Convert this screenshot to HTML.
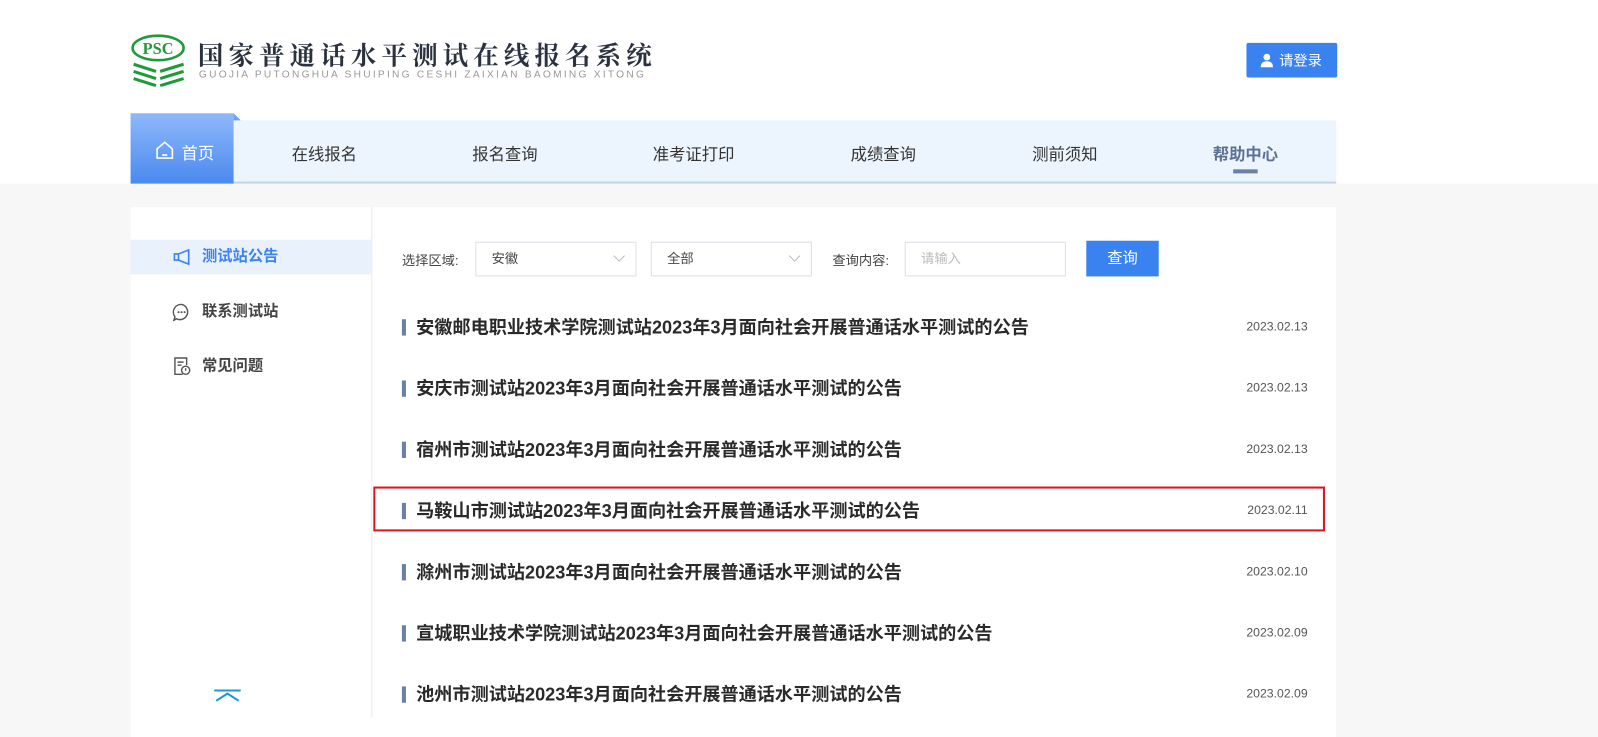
<!DOCTYPE html>
<html><head><meta charset="utf-8"><style>
*{margin:0;padding:0;box-sizing:border-box}
html,body{width:1598px;height:699px;overflow:hidden;background:#f7f7f7;font-family:"Liberation Sans","Noto Sans CJK SC",sans-serif}
#w{position:absolute;left:0;top:0;width:1570px;height:700px;transform:scale(1.02);transform-origin:0 0}
.top{position:absolute;left:0;top:0;width:1600px;height:180px;background:#fff}
.abs{position:absolute}
.nav{left:128px;top:118px;width:1182px;height:62px;background:#ecf4fe;border-bottom:2px solid #c3d3e8}
.nav span{position:absolute;top:20px;font-size:16px;color:#333;transform:translateX(-50%)}
.home{left:128px;top:111px;width:101px;height:69px;background:linear-gradient(#8fb8f9,#4a89ef);color:#fff;font-size:16px}
.card{left:128px;top:203px;width:1182px;height:520px;background:#fff}
.side{left:128px;top:203px;width:237px;height:500px;border-right:1px solid #eaeaea}
.si{position:absolute;left:0;width:236px;height:34px;font-size:15px;color:#444;font-weight:bold;line-height:34px;padding-left:70px}
.sel{height:34px;border:1px solid #dcdfe6;top:237px;font-size:13px;color:#444;line-height:32px;padding-left:15px}
.sel i{position:absolute;right:12px;top:9px;width:8px;height:8px;border-right:1px solid #bbb;border-bottom:1px solid #bbb;transform:rotate(45deg)}
.row{position:absolute;left:394px;width:888px;height:24px}
.row b{position:absolute;left:0;top:4px;width:4px;height:16px;background:#6a80a5}
.row .t{position:absolute;left:14px;top:0;font-size:17.8px;font-weight:bold;color:#2a2a2a;line-height:24px;white-space:nowrap}
.row .d{position:absolute;right:0;top:4px;font-size:12px;color:#555}
</style></head><body><div id="w">
<div class="top"></div>
<svg class="abs" style="left:128px;top:33px" width="54" height="52" viewBox="0 0 54 52">
<ellipse cx="27" cy="14" rx="25" ry="12" fill="none" stroke="#1f9a3a" stroke-width="2.5"/>
<text x="27" y="20" text-anchor="middle" font-family="Liberation Serif" font-weight="bold" font-size="16" fill="#1f9a3a">PSC</text>
<g stroke="#1f9a3a" stroke-width="3" fill="none"><path d="M3 30 L25 37 M29 37 L52 30"/><path d="M3 37 L25 44 M29 44 L52 37"/><path d="M3 44 L25 51 M29 51 L52 44"/></g>
</svg>
<div class="abs" style="left:194px;top:41px;font-size:25px;line-height:25px;color:#2a3240;letter-spacing:5px;font-family:'Noto Serif CJK SC','Noto Sans CJK SC',serif;font-weight:700">国家普通话水平测试在线报名系统</div>
<div class="abs" style="left:195px;top:69px;font-size:10px;line-height:10px;color:#999;letter-spacing:2.2px">GUOJIA PUTONGHUA SHUIPING CESHI ZAIXIAN BAOMING XITONG</div>
<div class="abs" style="left:1222px;top:42px;width:89px;height:34px;background:#3a82f0;border-radius:2px;color:#fff;font-size:14px;line-height:34px;padding-left:32px">请登录
<svg class="abs" style="left:13px;top:10px" width="14" height="14" viewBox="0 0 14 14"><circle cx="7" cy="4" r="3.3" fill="#fff"/><path d="M1 14 Q1 8 7 8 Q13 8 13 14Z" fill="#fff"/></svg></div>
<div class="abs nav">
<span style="left:190px">在线报名</span><span style="left:367px">报名查询</span><span style="left:552px">准考证打印</span><span style="left:738px">成绩查询</span><span style="left:916px">测前须知</span><span style="left:1093px;color:#5c7194;font-weight:bold">帮助中心</span>
<div class="abs" style="left:1081px;top:48px;width:24px;height:4px;background:#6a80a5"></div>
</div>
<div class="abs home"><svg class="abs" style="left:24px;top:27px" width="19" height="18" viewBox="0 0 19 18"><path d="M2 8 L9.5 1.5 L17 8 V17 H2Z M7 14 H12" fill="none" stroke="#fff" stroke-width="1.6"/></svg><span class="abs" style="left:50px;top:26px">首页</span></div>
<div class="abs" style="left:229px;top:111px;width:0;height:0;border-left:7px solid #6f9ef2;border-top:7px solid transparent"></div>
<div class="abs card"></div>
<div class="abs side">
<div class="si" style="top:32px;background:#e9f1fd;color:#3c82f0">测试站公告</div>
<div class="si" style="top:86px">联系测试站</div>
<div class="si" style="top:139px">常见问题</div>
<svg class="abs" style="left:41px;top:41px" width="18" height="16" viewBox="0 0 18 16"><path d="M2 5 H6 L16 1 V15 L6 11 H2Z M6 5V11" fill="none" stroke="#3c82f0" stroke-width="1.6"/></svg>
<svg class="abs" style="left:41px;top:94px" width="18" height="18" viewBox="0 0 18 18"><path d="M9 1.5 A7.5 7.5 0 1 1 4 15.5 L1.5 17 L2.5 13.5 A7.5 7.5 0 0 1 9 1.5Z" fill="none" stroke="#555" stroke-width="1.4"/><circle cx="6" cy="9" r="1" fill="#555"/><circle cx="9" cy="9" r="1" fill="#555"/><circle cx="12" cy="9" r="1" fill="#555"/></svg>
<svg class="abs" style="left:42px;top:147px" width="17" height="18" viewBox="0 0 17 18"><path d="M9 17H1.5V1H13V8 M4 5H10 M4 8H8" fill="none" stroke="#555" stroke-width="1.4"/><circle cx="12" cy="13" r="4" fill="none" stroke="#555" stroke-width="1.4"/><path d="M12 11V13.5" stroke="#555" stroke-width="1.4"/></svg>
<svg class="abs" style="left:80px;top:472px" width="30" height="20" viewBox="0 0 30 20"><path d="M2 2H28 M4 12 L15 5 L26 12" fill="none" stroke="#1d9ad6" stroke-width="2"/></svg>
</div>
<div class="abs" style="left:394px;top:245px;font-size:13px;color:#444">选择区域:</div>
<div class="abs sel" style="left:466px;width:158px">安徽<i></i></div>
<div class="abs sel" style="left:638px;width:158px">全部<i></i></div>
<div class="abs" style="left:816px;top:245px;font-size:13px;color:#444">查询内容:</div>
<div class="abs sel" style="left:887px;width:158px;color:#bbb">请输入</div>
<div class="abs" style="left:1065px;top:236px;width:71px;height:35px;background:#3a82f0;color:#fff;font-size:15px;line-height:35px;text-align:center">查询</div>
<div class="row" style="top:309px"><b></b><span class="t">安徽邮电职业技术学院测试站2023年3月面向社会开展普通话水平测试的公告</span><span class="d">2023.02.13</span></div>
<div class="row" style="top:369px"><b></b><span class="t">安庆市测试站2023年3月面向社会开展普通话水平测试的公告</span><span class="d">2023.02.13</span></div>
<div class="row" style="top:429px"><b></b><span class="t">宿州市测试站2023年3月面向社会开展普通话水平测试的公告</span><span class="d">2023.02.13</span></div>
<div class="row" style="top:489px"><b></b><span class="t">马鞍山市测试站2023年3月面向社会开展普通话水平测试的公告</span><span class="d">2023.02.11</span></div>
<div class="row" style="top:549px"><b></b><span class="t">滁州市测试站2023年3月面向社会开展普通话水平测试的公告</span><span class="d">2023.02.10</span></div>
<div class="row" style="top:609px"><b></b><span class="t">宣城职业技术学院测试站2023年3月面向社会开展普通话水平测试的公告</span><span class="d">2023.02.09</span></div>
<div class="row" style="top:669px"><b></b><span class="t">池州市测试站2023年3月面向社会开展普通话水平测试的公告</span><span class="d">2023.02.09</span></div>
<div class="abs" style="left:366px;top:477px;width:933px;height:44px;border:2px solid #e0141e"></div>
</div></body></html>
